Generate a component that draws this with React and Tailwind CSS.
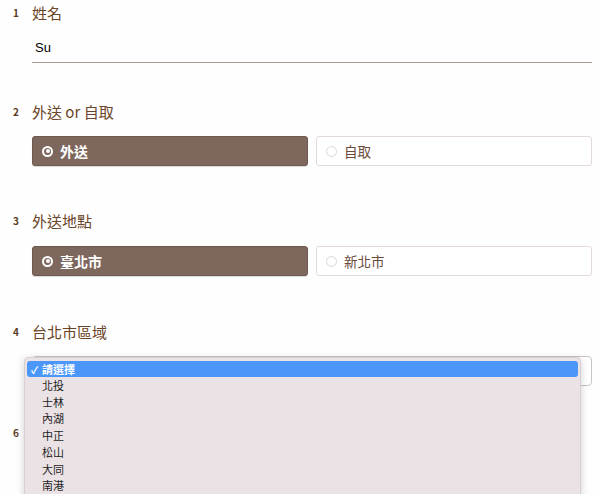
import { useState } from 'react'

const FONT = { fontFamily: '"Noto Sans CJK TC", "Liberation Sans", sans-serif' }

const DISTRICTS = ['北投', '士林', '內湖', '中正', '松山', '大同', '南港']

function Num({ n }) {
  return (
    <div className="w-[32px] pl-[13px] pt-[3px] text-[10px] font-bold leading-5 text-[#5b3a1e]">{n}</div>
  )
}

function Choice({ label, checked }) {
  return checked ? (
    <div className="flex-1 h-[30px] flex items-center gap-[7px] pl-[9px] rounded-[3px] bg-[#7e675d] border border-[#6f584e] shadow-[0_1px_1px_rgba(0,0,0,0.15)]">
      <span className="w-[11px] h-[11px] rounded-full border-[2px] border-white flex items-center justify-center">
        <span className="w-[4px] h-[4px] rounded-full bg-white" />
      </span>
      <span className="text-[14px] font-bold text-white">{label}</span>
    </div>
  ) : (
    <div className="flex-1 h-[30px] flex items-center gap-[7px] pl-[9px] rounded-[3px] bg-white border border-[#e3d8df]">
      <span className="w-[11px] h-[11px] rounded-full border border-[#dcd6da]" />
      <span className="text-[13.5px] text-[#6b4a3a]">{label}</span>
    </div>
  )
}

export default function App() {
  const [name] = useState('Su')

  return (
    <div className="w-[600px] h-[494px] overflow-hidden bg-[#fefefe]" style={FONT}>
      {/* 1 */}
      <div className="flex">
        <Num n="1" />
        <div className="flex-1 pr-[8px]">
          <div className="pt-[3px] h-[23px] text-[15px] leading-5 text-[#6b4527]">姓名</div>
          <div className="mt-[10px] h-[30px] flex items-center pl-[3px] border-b border-[#a89a94] text-[13px] text-black" style={{ fontFamily: '"Liberation Sans", sans-serif' }}>
            {name}
          </div>
        </div>
      </div>

      {/* 2 */}
      <div className="flex mt-[36px]">
        <Num n="2" />
        <div className="flex-1 pr-[8px]">
          <div className="pt-[3px] h-[23px] text-[15px] leading-5 text-[#6b4527]">外送 or 自取</div>
          <div className="mt-[14px] flex gap-[8px]">
            <Choice label="外送" checked />
            <Choice label="自取" />
          </div>
        </div>
      </div>

      {/* 3 */}
      <div className="flex mt-[42px]">
        <Num n="3" />
        <div className="flex-1 pr-[8px]">
          <div className="pt-[3px] h-[23px] text-[15px] leading-5 text-[#6b4527]">外送地點</div>
          <div className="mt-[15px] flex gap-[8px]">
            <Choice label="臺北市" checked />
            <Choice label="新北市" />
          </div>
        </div>
      </div>

      {/* 4 */}
      <div className="flex mt-[43px]">
        <Num n="4" />
        <div className="flex-1 pr-[8px]">
          <div className="pt-[3px] h-[23px] text-[15px] leading-5 text-[#6b4527]">台北市區域</div>
          <div className="relative mt-[14px]">
            <div className="h-[30px] rounded-[4px] border border-[#c9c3c5] bg-white" />
            {/* open select menu */}
            <div className="absolute left-[-8px] top-[1px] w-[557px] h-[160px] bg-[#ebe2e6] border border-[#d8cfd3] rounded-[4px] shadow-[0_2px_8px_rgba(0,0,0,0.18)] px-[2px] pt-[3px] text-[11px] text-[#1e1e1e] z-10">
              <div className="h-[16px] flex items-center rounded-[3px] bg-[#4b97f9] text-white font-bold">
                <span className="w-[15px] pl-[4px] text-[10px]">✓</span>
                <span>請選擇</span>
              </div>
              {DISTRICTS.map(d => (
                <div key={d} className="h-[16.7px] flex items-center pl-[15px]">{d}</div>
              ))}
            </div>
          </div>
        </div>
      </div>

      {/* 6: label hidden under the open menu */}
      <div className="flex mt-[34px]">
        <Num n="6" />
      </div>
    </div>
  )
}
